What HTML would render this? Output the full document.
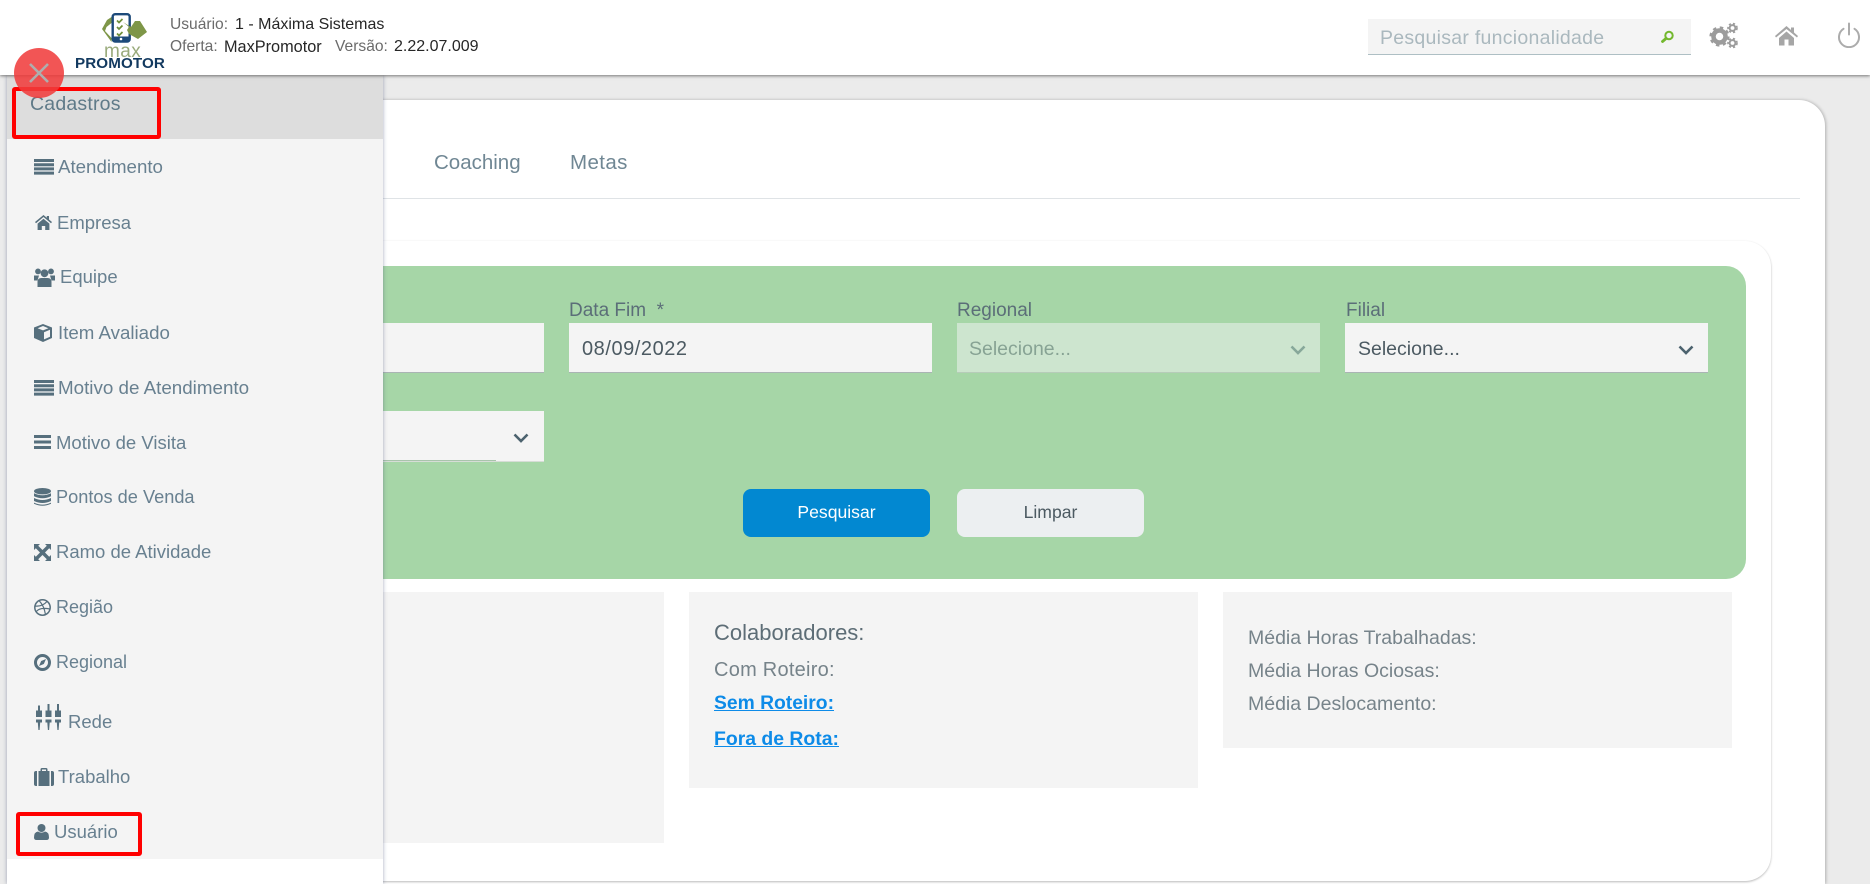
<!DOCTYPE html>
<html lang="pt-BR">
<head>
<meta charset="utf-8">
<title>MaxPromotor</title>
<style>
html,body{margin:0;padding:0;width:1870px;height:884px;overflow:hidden;background:#ebebeb;font-family:"Liberation Sans",Arial,sans-serif}
#wrap{position:relative;width:1870px;height:884px;overflow:hidden;background:#ebebeb}
.a{position:absolute}
.t{position:absolute;white-space:nowrap;height:24px;line-height:24px}
svg{position:absolute}
#hdr{left:0;top:0;width:1870px;height:75px;background:#fff;box-shadow:0 1px 3px rgba(0,0,0,.5);z-index:7}
#card{left:100px;top:100px;width:1725px;height:784px;background:#fff;border-radius:26px 26px 0 0;box-shadow:1px 0 3px rgba(0,0,0,.25)}
#inner{left:100px;top:241px;width:1671px;height:640px;background:#fff;border-radius:26px;box-shadow:0 1px 2px rgba(0,0,0,.28)}
#green{left:100px;top:266px;width:1646px;height:313px;background:#a6d6a7;border-radius:20px}
.f{position:absolute;height:49px;background:#f4f4f4;border-bottom:1px solid #aab4b4}
.lb{font-size:19px;color:#5b6e78}
.pn{position:absolute;background:#f4f4f4}
.m{font-size:18.5px;color:#688090}
.g{font-size:19.5px;color:#76838a}
#side{left:7px;top:75px;width:376px;height:809px;background:#fff;box-shadow:0 0 4px rgba(60,70,110,.45);z-index:6}
#sidebg{left:7px;top:139px;width:376px;height:720px;background:#f4f4f4;z-index:6}
#sidehd{left:7px;top:75px;width:376px;height:64px;background:#ddd;z-index:6}
.z{z-index:7}
.rb{position:absolute;border:4px solid #f00;border-radius:3px;box-sizing:border-box;z-index:8}
</style>
</head>
<body>
<div id="wrap">

<div class="a" id="card"></div>
<div class="a" style="left:383px;top:198px;width:1417px;height:1px;background:#dfe3e6"></div>
<div class="t" style="left:362px;top:152px;font-size:20.5px;color:#2a7fd0">o</div>
<div class="t" style="left:434px;top:151px;font-size:20.5px;color:#708794">Coaching</div>
<div class="t" style="left:570px;top:151px;font-size:20.5px;color:#708794;letter-spacing:.4px">Metas</div>

<div class="a" id="inner"></div>
<div class="a" id="green"></div>

<div class="t lb" style="left:569px;top:299px">Data Fim &nbsp;*</div>
<div class="t lb" style="left:957px;top:299px">Regional</div>
<div class="t lb" style="left:1346px;top:299px">Filial</div>

<div class="f" style="left:300px;top:323px;width:244px"></div>
<div class="f" style="left:569px;top:323px;width:363px"></div>
<div class="t" style="left:582px;top:337px;font-size:20px;letter-spacing:.55px;color:#4c5a62">08/09/2022</div>
<div class="f" style="left:957px;top:323px;width:363px;background:#cde5cf;border-bottom-color:#b6ccb9"></div>
<div class="t" style="left:969px;top:337px;font-size:19.5px;color:#87a394">Selecione...</div>
<svg style="left:1290px;top:345px" width="16" height="10"><path d="M1.500 1.500L8 8l6.500-6.500" fill="none" stroke="#87a89a" stroke-width="2.600"/></svg>
<div class="f" style="left:1345px;top:323px;width:363px"></div>
<div class="t" style="left:1358px;top:337px;font-size:19.5px;color:#4c5a62">Selecione...</div>
<svg style="left:1678px;top:345px" width="16" height="10"><path d="M1.500 1.500L8 8l6.500-6.500" fill="none" stroke="#4c626e" stroke-width="2.600"/></svg>
<div class="a" style="left:300px;top:411px;width:244px;height:50px;background:#f4f4f4;border-bottom:1px solid #d6ddd6"></div>
<div class="a" style="left:300px;top:460px;width:196px;height:1px;background:#a9c4ac"></div>
<svg style="left:513px;top:433px" width="16" height="10"><path d="M1.500 1.500L8 8l6.500-6.500" fill="none" stroke="#4c626e" stroke-width="2.600"/></svg>

<div class="a" style="left:743px;top:489px;width:187px;height:48px;background:#0288d1;border-radius:8px"></div>
<div class="t" style="left:743px;top:500px;width:187px;text-align:center;font-size:17.6px;color:#fff">Pesquisar</div>
<div class="a" style="left:957px;top:489px;width:187px;height:48px;background:#eceff1;border-radius:8px"></div>
<div class="t" style="left:957px;top:500px;width:187px;text-align:center;font-size:17.6px;color:#4c5a62">Limpar</div>

<div class="pn" style="left:300px;top:592px;width:364px;height:251px"></div>
<div class="pn" style="left:689px;top:592px;width:509px;height:196px"></div>
<div class="pn" style="left:1223px;top:592px;width:509px;height:156px"></div>

<div class="t" style="left:714px;top:620px;font-size:22px;line-height:26px;color:#5d6d76">Colaboradores:</div>
<div class="t" style="left:714px;top:657px;font-size:20px;letter-spacing:.25px;line-height:26px;color:#76838a">Com Roteiro:</div>
<div class="t" style="left:714px;top:692px;font-size:19.3px;font-weight:bold;color:#0d8be8;text-decoration:underline">Sem Roteiro:</div>
<div class="t" style="left:714px;top:727px;font-size:19.4px;font-weight:bold;color:#0d8be8;text-decoration:underline">Fora de Rota:</div>
<div class="t g" style="left:1248px;top:625px;line-height:26px">Média Horas Trabalhadas:</div>
<div class="t g" style="left:1248px;top:658px;line-height:26px">Média Horas Ociosas:</div>
<div class="t g" style="left:1248px;top:691px;line-height:26px">Média Deslocamento:</div>

<!-- header -->
<div class="a" id="hdr">
  <svg style="left:0;top:0" width="180" height="75">
    <path d="M102 29l5-9 4.500-3v6l-5 4-1.500 4 6.500 7v4z" fill="#7e9648"/>
    <rect x="112.700" y="14.200" width="17" height="27.300" rx="2.500" fill="#fff" stroke="#1d4a7a" stroke-width="2.400"/>
    <rect x="113" y="36.500" width="16" height="5" fill="#1d4a7a"/>
    <circle cx="121" cy="39" r="1.300" fill="#fff"/>
    <path d="M117 20.500l2 2 3.500-3.500M117 27l2 2 3.500-3.500M117 33.500l2 2 3.500-3.500" fill="none" stroke="#6f8f3a" stroke-width="1.700"/>
    <path d="M123 22l8 5 4-6h5l7 11-9 7-9-5-2-4 2-3z" fill="#7e9648"/>
  </svg>
  <div class="t" style="left:104px;top:40px;font-size:19px;color:#9aab7c;letter-spacing:.4px">max</div>
  <div class="t" style="left:75px;top:52px;font-size:15.2px;font-weight:bold;color:#12395f;letter-spacing:.1px">PROMOTOR</div>

  <div class="t" style="left:170px;top:13px;font-size:15.6px;color:#6b6b6b">Usuário:</div>
  <div class="t" style="left:235px;top:13px;font-size:16px;color:#262626">1 - Máxima Sistemas</div>
  <div class="t" style="left:170px;top:35px;font-size:15.6px;color:#6b6b6b">Oferta:</div>
  <div class="t" style="left:224px;top:35px;font-size:16.3px;color:#262626">MaxPromotor</div>
  <div class="t" style="left:335px;top:35px;font-size:15.6px;color:#6b6b6b">Versão:</div>
  <div class="t" style="left:394px;top:35px;font-size:16px;color:#262626">2.22.07.009</div>

  <div class="a" style="left:1368px;top:19px;width:323px;height:35px;background:#f4f4f4;border-bottom:1px solid #aebfc4"></div>
  <div class="t" style="left:1380px;top:26px;font-size:19.5px;color:#aab8be;letter-spacing:.27px">Pesquisar funcionalidade</div>
  <svg style="left:1660px;top:30px" width="15" height="13"><circle cx="9" cy="5.500" r="3.700" fill="none" stroke="#74b82e" stroke-width="2"/><path d="M6 8.500L2.500 11.500" stroke="#74b82e" stroke-width="2.800" stroke-linecap="round"/></svg>

  <svg style="left:1705px;top:20px" width="40" height="30">
    <circle cx="14.500" cy="16.500" r="6" fill="none" stroke="#9c9c9c" stroke-width="4.500"/>
    <circle cx="14.500" cy="16.500" r="9" fill="none" stroke="#9c9c9c" stroke-width="2.200" stroke-dasharray="3.500 3.570"/>
    <circle cx="27.500" cy="8" r="2.900" fill="none" stroke="#9c9c9c" stroke-width="2"/>
    <circle cx="27.500" cy="8" r="4.500" fill="none" stroke="#9c9c9c" stroke-width="1.600" stroke-dasharray="2.200 2.100"/>
    <circle cx="27.500" cy="23" r="2.900" fill="none" stroke="#9c9c9c" stroke-width="2"/>
    <circle cx="27.500" cy="23" r="4.500" fill="none" stroke="#9c9c9c" stroke-width="1.600" stroke-dasharray="2.200 2.100"/>
  </svg>
  <svg style="left:1775px;top:26px" width="24" height="20"><path d="M11.500 0L0 10l1 1.500L11.500 3 22 11.500l1-1.500-4-3.500V1.500h-3v2.500zM4 12l7.500-6.500L19 12v7.500h-5.500v-6h-4v6H4z" fill="#a6a6a6"/></svg>
  <svg style="left:1837px;top:22px" width="24" height="26"><path d="M12 1.500v11" stroke="#acacac" stroke-width="2" stroke-linecap="round"/><path d="M6.500 6.800a10 10 0 1 0 11 0" fill="none" stroke="#acacac" stroke-width="2" stroke-linecap="round"/></svg>
</div>

<!-- sidebar -->
<div class="a" id="side"></div>
<div class="a" id="sidebg"></div>
<div class="a" id="sidehd"></div>
<div class="t z" style="left:30px;top:92px;font-size:19.5px;color:#5f7a88;letter-spacing:.2px">Cadastros</div>

<svg style="left:34px;top:159px;z-index:7" width="20" height="16"><path d="M0 0h20v3H0zM0 4.200h20v3H0zM0 8.400h20v3H0zM0 12.600h20v3H0z" fill="#566f7d"/></svg>
<div class="t z" style="left:58px;top:155px;font-size:18.7px;color:#688090">Atendimento</div>

<svg style="left:35px;top:215px;z-index:7" width="17" height="15"><path d="M8.500 0L0 7l1 1.200L8.500 2 16 8.200 17 7l-3-2.500V1h-2.200v1.700zM2.600 8.600L8.500 3.800l5.900 4.800V15h-4.200v-4H6.800v4H2.600z" fill="#566f7d"/></svg>
<div class="t m z" style="left:57px;top:211px">Empresa</div>

<svg style="left:34px;top:268px;z-index:7" width="21" height="19"><circle cx="4" cy="3.400" r="2.900" fill="#566f7d"/><circle cx="17" cy="3.400" r="2.900" fill="#566f7d"/><circle cx="10.500" cy="5.300" r="3.900" fill="#566f7d"/><path d="M0 7.500h5l-1.500 5H0zM16 7.500h5v5h-3.500z" fill="#566f7d"/><path d="M3.500 19v-5q0-4 4-4h6q4 0 4 4v5z" fill="#566f7d"/></svg>
<div class="t m z" style="left:60px;top:265px">Equipe</div>

<svg style="left:34px;top:324px;z-index:7" width="18" height="18"><path d="M9 0l9 3.500v10.500L9 18 0 14V3.500zM9 2L3.600 4.200 9 6.400l5.400-2.200zM10 8.200v7.200l6-2.700V5.800z" fill="#566f7d" fill-rule="evenodd"/></svg>
<div class="t z" style="left:58px;top:321px;font-size:18.7px;color:#688090">Item Avaliado</div>

<svg style="left:34px;top:380px;z-index:7" width="20" height="16"><path d="M0 0h20v3H0zM0 4.200h20v3H0zM0 8.400h20v3H0zM0 12.600h20v3H0z" fill="#566f7d"/></svg>
<div class="t z" style="left:58px;top:376px;font-size:18.8px;color:#688090">Motivo de Atendimento</div>

<svg style="left:34px;top:435px;z-index:7" width="17" height="14"><path d="M0 0h17v3H0zM0 5.500h17v3H0zM0 11h17v3H0z" fill="#566f7d"/></svg>
<div class="t m z" style="left:56px;top:431px">Motivo de Visita</div>

<svg style="left:34px;top:488px;z-index:7" width="17" height="19"><ellipse cx="8.500" cy="3.200" rx="8.500" ry="3.200" fill="#566f7d"/><path d="M0 5.200q8.500 4 17 0v3q-8.500 4-17 0zM0 10q8.500 4 17 0v3q-8.500 4-17 0zM0 14.600q8.500 4 17 0v1.200q-8.500 4-17 0z" fill="#566f7d"/></svg>
<div class="t z" style="left:56px;top:485px;font-size:18.2px;color:#688090">Pontos de Venda</div>

<svg style="left:34px;top:544px;z-index:7" width="17" height="17"><path d="M0 0h6L4.200 1.800 8.500 6l4.300-4.200L11 0h6v6l-1.800-1.800L11 8.500l4.200 4.300L17 11v6h-6l1.800-1.800L8.500 11l-4.300 4.200L6 17H0v-6l1.800 1.800L6 8.500 1.800 4.200 0 6z" fill="#566f7d"/></svg>
<div class="t m z" style="left:56px;top:540px">Ramo de Atividade</div>

<svg style="left:34px;top:599px;z-index:7" width="17" height="17"><circle cx="8.500" cy="8.500" r="7.700" fill="none" stroke="#566f7d" stroke-width="1.500"/><path d="M5 1.600q5 5 6.500 14M1 7q7 1 12-4.500M2.200 12.600Q6 8 15.800 10" fill="none" stroke="#566f7d" stroke-width="1.200"/></svg>
<div class="t z" style="left:56px;top:595px;font-size:18px;color:#688090">Região</div>

<svg style="left:34px;top:654px;z-index:7" width="17" height="17"><circle cx="8.500" cy="8.500" r="7" fill="none" stroke="#566f7d" stroke-width="3"/><path d="M12 5L9.800 10 5 12l2.200-5z" fill="#566f7d"/></svg>
<div class="t z" style="left:56px;top:650px;font-size:18px;color:#688090">Regional</div>

<svg style="left:36px;top:704px;z-index:7" width="26" height="26"><path d="M2 1.500h2v5h2V13H0V6.500h2zM11.500 0h2v6.500h2V13h-6V6.500h2zM21 0h2v6.500h2V13h-6V6.500h2zM0 15.500h6v3H4.200L3.600 26H2.400l-.6-7.500H0zM9.500 15.500h6v3h-1.800l-.6 7.500h-1.200l-.6-7.500H9.500zM19 15.500h6v3h-1.800l-.6 7.500h-1.200l-.6-7.500H19z" fill="#566f7d"/></svg>
<div class="t m z" style="left:68px;top:710px">Rede</div>

<svg style="left:34px;top:768px;z-index:7" width="20" height="18"><path d="M6.500 3V1.500Q6.500 0 8 0h4q1.500 0 1.500 1.500V3H12V1.500H8V3z" fill="#566f7d"/><path d="M0 5q0-2 2-2h1v15H2q-2 0-2-2zM4.500 3h11v15h-11zM17 3h1q2 0 2 2v11q0 2-2 2h-1z" fill="#566f7d"/></svg>
<div class="t m z" style="left:58px;top:765px">Trabalho</div>

<svg style="left:34px;top:824px;z-index:7" width="15" height="16"><circle cx="7.500" cy="4" r="4" fill="#566f7d"/><path d="M0 13.500Q0 8 4 7.500q3.500 2.200 7 0 4 .5 4 6 0 2.500-2.500 2.500h-10Q0 16 0 13.500z" fill="#566f7d"/></svg>
<div class="t m z" style="left:54px;top:820px">Usuário</div>

<div class="rb" style="left:12px;top:87px;width:149px;height:52px"></div>
<div class="rb" style="left:16px;top:812px;width:126px;height:44px"></div>

<div class="a" style="left:14px;top:48px;width:50px;height:50px;border-radius:50%;background:rgba(240,60,60,.87);z-index:9"></div>
<svg style="left:29px;top:63px;z-index:10" width="20" height="20"><path d="M1 1l18 18M19 1L1 19" stroke="#aeaeae" stroke-width="2.600"/></svg>

</div>
</body>
</html>
